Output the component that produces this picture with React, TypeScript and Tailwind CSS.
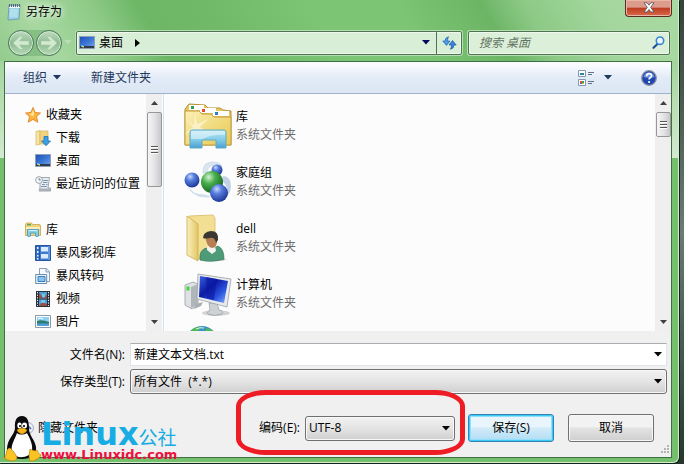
import { useState } from "react";
import type { ReactNode } from "react";

interface Place {
  name: string;
  icon: ReactNode;
}

function Arrow({ className = "" }: { className?: string }) {
  return (
    <svg viewBox="0 0 8 5" className={`h-[5px] w-2 shrink-0 ${className}`} fill="currentColor">
      <path d="M0 0h8L4 4.6z" />
    </svg>
  );
}

function NotepadIcon() {
  return (
    <svg viewBox="0 0 16 18" className="h-[18px] w-4 shrink-0">
      <path d="M3 2h11l-1 14-11 1z" fill="#9bd3e6" stroke="#5e8ea0" strokeWidth=".7" />
      <path d="M3 3h11v2H3z" fill="#e9f5f8" />
      <path d="M4 7h8M4 9h8M3.500 11h8M3.500 13h8" stroke="#c9ebf3" />
      <path d="M3.500 1v3M5.500 1v3M7.500 1v3M9.500 1v3M11.500 1v3M13.500 1v3" stroke="#4f5f66" strokeWidth=".9" />
    </svg>
  );
}

function DesktopIcon() {
  return (
    <svg viewBox="0 0 16 13" className="h-[13px] w-4 shrink-0">
      <defs>
        <linearGradient id="desk" x1="0" y1="0" x2="1" y2="1">
          <stop offset="0" stopColor="#1e4fb0" />
          <stop offset=".55" stopColor="#3f7ad9" />
          <stop offset="1" stopColor="#78a8ee" />
        </linearGradient>
      </defs>
      <path d="M.5.5h15v12H.5z" fill="url(#desk)" stroke="#8f9fb8" />
      <path d="M1 10h14v2H1z" fill="#303b4c" />
      <path d="M2 9h2v2H2z" fill="#4ec0f0" />
      <path d="M3.500 10h1.500v1.500H3.500z" fill="#f1d14b" />
    </svg>
  );
}

function StarIcon() {
  return (
    <svg viewBox="0 0 16 16" className="size-4 shrink-0">
      <path
        d="M8 .5l2.200 5 5.300.5-4 3.600 1.300 5.600L8 12.400l-4.800 2.800 1.300-5.600-4-3.600 5.300-.5z"
        fill="#fcb43c"
        stroke="#e0842a"
        strokeWidth=".9"
      />
      <path d="M8 3l1.300 3.600L8 9.500 4.500 7l2.300-.4z" fill="#ffe89c" />
    </svg>
  );
}

function DownloadIcon() {
  return (
    <svg viewBox="0 0 16 16" className="size-4 shrink-0">
      <path d="M1 1.500l4-1v14l-4 .5z" fill="#f6e3a0" stroke="#d5b45f" strokeWidth=".7" />
      <path d="M5 1h8v13H5z" fill="#efd57d" stroke="#d5b45f" strokeWidth=".7" />
      <path d="M9 6.500h4V11h2.500L11 15.700 6.500 11H9z" fill="#3ca0e8" stroke="#1f6eb5" strokeWidth=".8" />
    </svg>
  );
}

function RecentIcon() {
  return (
    <svg viewBox="0 0 16 16" className="size-4 shrink-0">
      <path d="M5 1.500h9.500L13 12h2.500v3H4l1-3z" fill="#e9ecef" stroke="#8b949c" strokeWidth=".8" />
      <path d="M8 4.500h5M8 6.500h4.500M7 8.500h3M11 8.500h1.500M6 10.500h6" stroke="#7b96b2" />
      <path d="M4 12.500h11V15H4z" fill="#a9b1b8" />
      <circle cx="4" cy="4" r="3.400" fill="#f3f7fa" stroke="#8b949c" strokeWidth=".8" />
      <path d="M4 2v2h1.800" stroke="#55718b" strokeWidth=".8" fill="none" />
    </svg>
  );
}

function SmallLibraryIcon() {
  return (
    <svg viewBox="0 0 16 16" className="size-4 shrink-0">
      <path d="M.5 13.500V2.500l1-1.500h5l1 1.500H14q1.500 0 1.500 1.500v9.500z" fill="#efd67c" stroke="#c9a347" strokeWidth=".8" />
      <path d="M2 2h4v1.500H2z" fill="#5aa95a" />
      <path d="M1 5h14v2H1z" fill="#f9eebb" />
      <path d="M2.500 7.500h11V14q-1.500 1.300-3 0v-3h-5v3q-1.500 1.300-3 0z" fill="#86cdea" stroke="#3f97c2" strokeWidth=".8" />
      <path d="M3.500 8.500h9" stroke="#d3f0fa" />
    </svg>
  );
}

function LibraryIcon() {
  return (
    <svg viewBox="0 0 48 48" className="size-12 shrink-0">
      <defs>
        <linearGradient id="lib" x1="0" y1="0" x2="1" y2="1">
          <stop offset="0" stopColor="#fbf0b4" />
          <stop offset="1" stopColor="#e8c850" />
        </linearGradient>
        <linearGradient id="stand" x1="0" y1="0" x2="0" y2="1">
          <stop offset="0" stopColor="#bfe9f4" />
          <stop offset=".6" stopColor="#7cc8e4" />
          <stop offset="1" stopColor="#4a9fd0" />
        </linearGradient>
      </defs>
      <path d="M1 43V7l4-5 16 1 3 3h12l3 2 8 1v34z" fill="#e5c65e" stroke="#b98f38" />
      <path d="M5 3h15v5H5z" fill="#fff" />
      <path d="M16 6h16v5H16z" fill="#fff" />
      <path d="M29 9h16v5H29z" fill="#fff" />
      <path d="M7 4h3v3H7z" fill="#2f9d4c" />
      <path d="M18 7h3v3h-3z" fill="#dd4b28" />
      <path d="M31 10h3v3h-3z" fill="#2c7fce" />
      <path d="M1 43V9h14l3 3h9l3 3h17v28z" fill="url(#lib)" stroke="#c49c42" />
      <path d="M1 32l8-7-6-7 7 5 1-12 2 11 11-5-8 8 10 6-12-3-3 12-2-11z" fill="#fffdf0" opacity=".55" />
      <path d="M8 28h32q2 0 2 2v16h-10v-8H18v8H6V30q0-2 2-2z" fill="url(#stand)" stroke="#5fabc9" />
      <path d="M7 29h34v4q-13-1-22 4H7z" fill="#e4f7fb" opacity=".6" />
    </svg>
  );
}

function FilmLibraryIcon() {
  return (
    <svg viewBox="0 0 16 16" className="size-4 shrink-0">
      <path d="M.5.500h4v15h-4z" fill="#376fc4" stroke="#24559f" />
      <path d="M4.500.500h11v15h-11z" fill="#3c7ad0" stroke="#24559f" />
      <path d="M2 2h1.500v2H2zM2 6h1.500v2H2zM2 10h1.500v1.500H2zM2 13h1.500v1.500H2z" fill="#e5f0ff" />
      <path d="M6 2h7v4.500H6zM6 9h7v4.500H6z" fill="#d9ecff" />
      <path d="M14 1v14" stroke="#86b4ed" />
    </svg>
  );
}

function TranscodeIcon() {
  return (
    <svg viewBox="0 0 16 16" className="size-4 shrink-0">
      <path d="M4.500.500h7l3 3v10h-10z" fill="#f5f9fd" stroke="#8ba0b5" />
      <path d="M11 .5v3.500h3.500" fill="#dce8f2" stroke="#8ba0b5" />
      <path d="M.7 6.500h11v9H.7z" fill="#eef5fb" stroke="#6b8bab" />
      <path d="M3 8.500h7v5H3z" fill="#8cc3ee" stroke="#3a7fbd" />
    </svg>
  );
}

function VideoIcon() {
  return (
    <svg viewBox="0 0 16 16" className="size-4 shrink-0">
      <path d="M1 0h14v16H1z" fill="#29313a" />
      <path d="M4 1h8v6.500H4zM4 8.500h8V15H4z" fill="#4e9fd8" />
      <path d="M4 2l3 3 1 2.500H4zM12 3v4.500H9zM4 15l3-4 5 2v2z" fill="#9a4d47" />
      <path d="M7 3h3v3H7zM6 9h4v3H6z" fill="#71c4ea" />
      <path d="M2.500 1v14M13.500 1v14" stroke="#e7edf2" strokeDasharray="1.300 1.300" />
    </svg>
  );
}

function PictureIcon() {
  return (
    <svg viewBox="0 0 16 13" className="h-[13px] w-4 shrink-0">
      <path d="M.5.500h15v12H.5z" fill="#fff" stroke="#8b98a5" />
      <path d="M2 2h12v9H2z" fill="#8fd1f2" />
      <path d="M2 6q5-2 12 1v2H2z" fill="#2f7d70" />
      <path d="M2 8.500h12V11H2z" fill="#4f9fd8" />
      <path d="M3 3.500q3-1 5 .5" stroke="#fff" fill="none" />
    </svg>
  );
}

function HomegroupIcon() {
  return (
    <svg viewBox="0 0 48 48" className="size-12 shrink-0">
      <defs>
        <radialGradient id="blueBall" cx=".38" cy=".28" r=".75">
          <stop offset="0" stopColor="#c9d9fb" />
          <stop offset=".35" stopColor="#5a80e0" />
          <stop offset="1" stopColor="#1a3390" />
        </radialGradient>
        <radialGradient id="greenBall" cx=".35" cy=".28" r=".75">
          <stop offset="0" stopColor="#d4f3ce" />
          <stop offset=".4" stopColor="#48ad4c" />
          <stop offset="1" stopColor="#14641f" />
        </radialGradient>
      </defs>
      <path d="M19 15q-1-11 10-11 6 0 9 4l-8-1q-7 1-7 8z" fill="#dbe5f0" stroke="#c0d1e4" strokeWidth=".6" />
      <path d="M39 18q8 0 8 11-1 8-5 9 3-10-4-15z" fill="#c2d2e6" />
      <path d="M4 28q4 7 12 8 7 0 11 3-10 2-17-3-5-3-6-8z" fill="#d3dfec" />
      <circle cx="33" cy="12" r="5.500" fill="url(#blueBall)" />
      <circle cx="8" cy="22" r="7.500" fill="url(#blueBall)" />
      <circle cx="28" cy="24" r="11" fill="url(#greenBall)" />
      <circle cx="35" cy="35" r="9" fill="url(#blueBall)" />
    </svg>
  );
}

function UserFolderIcon() {
  return (
    <svg viewBox="0 0 48 48" className="size-12 shrink-0">
      <defs>
        <linearGradient id="flap" x1="0" y1="0" x2="1" y2="0">
          <stop offset="0" stopColor="#faf0bd" />
          <stop offset="1" stopColor="#e3c768" />
        </linearGradient>
      </defs>
      <path d="M5 2l24-1 2 3v38l-17 3z" fill="#f2df93" stroke="#d9bb63" strokeWidth=".8" />
      <path d="M3 2l11 8v37L3 41z" fill="url(#flap)" stroke="#cfa948" strokeWidth=".8" />
      <path d="M32 45h11l-4 2H28z" fill="#c9c9c9" />
      <path d="M16 46q-1-11 7-12l5 1 6-3q6 3 6 13-12 4-24 1z" fill="#4d9b78" stroke="#33795b" strokeWidth=".7" />
      <path d="M23 32h8l1 5-4 3-5-4z" fill="#f2f3ef" />
      <path d="M21 22q1-4 5-4 8 0 7 8 0 8-5 8t-7-12z" fill="#b97f54" />
      <path d="M19 24q0-6 8-7 8 0 7 9l-2 3q-1-6-6-5-5 1-7 0z" fill="#3b3632" />
    </svg>
  );
}

function ComputerIcon() {
  return (
    <svg viewBox="0 0 48 48" className="size-12 shrink-0">
      <defs>
        <linearGradient id="screen" x1="0" y1="0" x2="1" y2="1">
          <stop offset="0" stopColor="#3a62df" />
          <stop offset=".4" stopColor="#0b1aa4" />
          <stop offset=".7" stopColor="#2c55e2" />
          <stop offset="1" stopColor="#8cb2f8" />
        </linearGradient>
      </defs>
      <ellipse cx="32" cy="43" rx="14" ry="3" fill="#d3d3d3" />
      <path d="M1 15l8-3 5 2v21l-6 4-7-4z" fill="#dfe2e4" stroke="#8d9296" strokeWidth=".7" />
      <path d="M7 17l7-3v21l-7 3z" fill="#b0b5b9" />
      <path d="M2.500 16.500h3v4h-3z" fill="#43d63c" />
      <path d="M12 34l7-2-2 4-7 3z" fill="#a8adb1" />
      <path d="M25 33h8l2 7q5 1 3 4-8 3-14 0-2-2 2-4z" fill="#cdd1d4" stroke="#969ba0" strokeWidth=".7" />
      <path d="M14 4l33 5-4 28-30-8z" fill="#e8eaec" stroke="#9ba1a7" strokeWidth=".8" />
      <path d="M16 6l28 5-4 22-25-6z" fill="url(#screen)" />
      <path d="M22 7l11 2-3 21-7-2z" fill="#0b18a0" opacity=".6" />
    </svg>
  );
}

function NetworkIcon() {
  return (
    <svg viewBox="0 0 48 48" className="size-12 shrink-0">
      <circle cx="18" cy="16" r="16" fill="#3c93c6" />
      <path d="M5 6q6-6 13-5l-4 4-7 3zM22 2q9 1 11 9l-6-3-6 1zM3 11l9-2 5 9-13 3z" fill="#4fb857" />
      <path d="M12 3q4-2 8-1M14 7q4-2 7-1" stroke="#d9f2fb" fill="none" />
    </svg>
  );
}

function RefreshIcon() {
  return (
    <svg viewBox="0 0 15 14" className="h-3.5 w-[15px]">
      <path d="M6.500.8Q3 1.500 3 5H.8l3.700 4.500L8 5H5.500q0-2.500 1-4.200z" fill="#4d9de6" stroke="#2264b0" strokeWidth=".7" />
      <path d="M8.500 13.200q3.500-.7 3.500-4.200h2.200l-3.700-4.500L7 9h2.500q0 2.500-1 4.200z" fill="#3a84da" stroke="#1d57a0" strokeWidth=".7" />
    </svg>
  );
}

function NavCircle({ label, flip = false }: { label: string; flip?: boolean }) {
  return (
    <button
      aria-label={label}
      className="flex size-[26px] items-center justify-center rounded-full border border-[#4d7a5c] bg-linear-to-b from-[#bfdcc0] via-[#8dbb93] to-[#b4dbb5] shadow-[inset_0_0_0_1px_#d5ead2]"
    >
      <svg viewBox="0 0 18 16" className={flip ? "h-4 w-[18px] -scale-x-100" : "h-4 w-[18px]"}>
        <path d="M1 8l7-6.500h3L7.500 6H17v4H7.500l3.500 4.500H8z" fill="#d3ead0" stroke="#a7cba8" strokeWidth=".6" />
      </svg>
    </button>
  );
}

function ScrollBar({ thumb }: { thumb: string }) {
  return (
    <div className="flex w-4 shrink-0 flex-col items-center bg-[#efefef] text-[#404040]">
      <button aria-label="Scroll up" className="flex h-[18px] w-full items-center justify-center">
        <svg viewBox="0 0 7 4" className="h-1 w-[7px]" fill="currentColor">
          <path d="M0 4h7L3.500 0z" />
        </svg>
      </button>
      <div
        className={`flex w-[15px] flex-col items-center justify-center gap-px rounded-xs border border-[#979797] bg-linear-to-r from-[#f5f5f5] via-[#e4e4e6] to-[#c9c9cd] ${thumb}`}
      >
        <i className="h-0.5 w-[7px] border-t border-[#555] bg-white" />
        <i className="h-0.5 w-[7px] border-t border-[#555] bg-white" />
        <i className="h-0.5 w-[7px] border-t border-[#555] bg-white" />
      </div>
      <button aria-label="Scroll down" className="mt-auto flex h-[18px] w-full items-center justify-center">
        <svg viewBox="0 0 7 4" className="h-1 w-[7px]" fill="currentColor">
          <path d="M0 0h7L3.500 4z" />
        </svg>
      </button>
    </div>
  );
}

function PlaceGroup({ title, icon, places }: { title: string; icon: ReactNode; places: Place[] }) {
  return (
    <section>
      <h2 className="flex h-[23px] items-center gap-[5px] pl-5">
        {icon}
        {title}
      </h2>
      <ul>
        {places.map((place) => (
          <li key={place.name} className="flex h-[23px] items-center gap-[5px] pl-[30px] whitespace-nowrap">
            {place.icon}
            {place.name}
          </li>
        ))}
      </ul>
    </section>
  );
}

function Penguin() {
  return (
    <svg viewBox="0 0 38 46" className="h-[46px] w-[38px] shrink-0">
      <path
        d="M18 0c-6 0-7.500 5-7 12C11 18 3 23 3 33c0 6 5 10 15 10 9 0 15-4 14-12-1-7-7-12-7-18C25 5 23.500 0 18 0z"
        fill="#0b0b0d"
      />
      <path d="M13 17c2 2 7 2 10 0 3 6 6 11 5 18-2 7-15 8-19 3-4-8 2-14 4-21z" fill="#fff" />
      <ellipse cx="15.500" cy="9.500" rx="2.200" ry="3" fill="#fff" />
      <ellipse cx="20.500" cy="9.500" rx="2.500" ry="3" fill="#fff" />
      <circle cx="16" cy="10" r="1.100" />
      <circle cx="20" cy="10" r="1.100" />
      <path d="M13 14q5-4 10 0-1 3-5 4-4-1-5-4z" fill="#f7b71b" stroke="#b87508" strokeWidth=".5" />
      <path d="M5 32q3 0 8 9 0 4-5 4-4-1-7-2-1-2 1-4 0-5 3-7z" fill="#fcc422" stroke="#a97a08" strokeWidth=".6" />
      <path d="M26 33q5 3 7 1 1 4 4 5 0 2-4 4-4 3-7 2-2-4 0-12z" fill="#fcc422" stroke="#a97a08" strokeWidth=".6" />
    </svg>
  );
}

const favorites: Place[] = [
  { name: "下载", icon: <DownloadIcon /> },
  { name: "桌面", icon: <DesktopIcon /> },
  { name: "最近访问的位置", icon: <RecentIcon /> },
];

const libraries: Place[] = [
  { name: "暴风影视库", icon: <FilmLibraryIcon /> },
  { name: "暴风转码", icon: <TranscodeIcon /> },
  { name: "视频", icon: <VideoIcon /> },
  { name: "图片", icon: <PictureIcon /> },
];

const folders: Place[] = [
  { name: "库", icon: <LibraryIcon /> },
  { name: "家庭组", icon: <HomegroupIcon /> },
  { name: "dell", icon: <UserFolderIcon /> },
  { name: "计算机", icon: <ComputerIcon /> },
];

const selectLook =
  "h-full w-full appearance-none rounded-[3px] border border-[#707070] bg-linear-to-b from-[#f2f2f2] via-[#e4e4e4] to-[#cfcfcf] px-[3px] shadow-[inset_0_0_0_1px_#f8f8f8] outline-none";

export default function App() {
  const [fileName, setFileName] = useState("新建文本文档.txt");
  const [fileType, setFileType] = useState("all");
  const [encoding, setEncoding] = useState("UTF-8");

  return (
    <div className="relative flex h-screen flex-col bg-linear-to-b from-[#33443a] via-[#6b7b72] to-[#26372c] pr-[5px] pb-px font-['Open_Sans','Noto_Sans_CJK_SC',sans-serif] text-[12px] leading-[18px] text-black">
      <div className="flex min-h-0 flex-1 flex-col rounded-br-md border-r border-b border-[#d5ecd1] bg-linear-to-b from-[#a2d59a] from-[60px] via-[#d3ead0] via-[158px] to-[#74c06d] to-[158px] pr-1.5 pb-1 pl-1 shadow-[1px_1px_0_#10251a]">
        <header className="-mr-1.5 -ml-1 bg-[linear-gradient(60deg,#93cb8d_0,#a8d8a1_8%,#8fcb88_17%,#6cb665_24%,#70ba69_34%,#7cc575_48%,#7cc575_60%,#6cb565_72%,#8cc986_78%,#a3d69c_88%,#a9d9a2_100%)] pr-1.5 pl-1">
          <div className="flex h-6 items-center pl-0.5">
            <NotepadIcon />
            <h1 className="px-1 [text-shadow:0_0_6px_#fff,0_0_10px_#fff]">另存为</h1>
            <button
              aria-label="关闭"
              className="ml-auto flex h-[17px] w-[47px] items-center justify-center self-start rounded-b-[4px] border border-t-0 border-[#5b2a23] bg-linear-to-b from-[#dc9c8c] from-45% via-[#bd3b1e] via-50% to-[#d8694a] shadow-[inset_0_0_0_1px_#eab6a8]"
            >
              <svg viewBox="0 0 12 11" className="mb-0.5 h-[11px] w-3">
                <path
                  d="M1 .8h3L6 3.200 8 .8h3L7.700 5.300 11 10H8L6 7.500 4 10H1l3.300-4.700z"
                  fill="#fff"
                  stroke="#4b4f5c"
                  strokeWidth=".8"
                />
              </svg>
            </button>
          </div>
          <nav className="flex h-[37px] items-center pr-0.5 pl-1">
            <div className="flex gap-0.5 rounded-full bg-[#86bf84]">
              <NavCircle label="后退" />
              <NavCircle label="前进" flip />
            </div>
            <button aria-label="最近的位置" className="mr-1 ml-0.5 text-[#b9dcb4]">
              <Arrow />
            </button>
            <div className="flex h-6 flex-1 items-center rounded-xs border border-[#4c7550] bg-[#d9eed6] shadow-[0_0_0_1px_#b5ddb0,inset_0_0_0_1px_#eff8ed]">
              <span className="pl-0.5">
                <DesktopIcon />
              </span>
              <button className="pl-1">桌面</button>
              <svg viewBox="0 0 5 8" className="ml-3 h-2 w-[5px]">
                <path d="M0 0l5 4-5 4z" />
              </svg>
              <button aria-label="历史路径" className="mr-1.5 ml-auto text-[#04045c]">
                <Arrow />
              </button>
              <button
                aria-label="刷新"
                className="flex h-full w-[25px] items-center justify-center border-l border-[#4c7550]"
              >
                <RefreshIcon />
              </button>
            </div>
            <label className="ml-1.5 flex h-6 w-[202px] items-center rounded-xs border border-[#4c7550] bg-[#dcf0d9] px-1 shadow-[0_0_0_1px_#b5ddb0,inset_0_0_0_1px_#eff8ed]">
              <input
                type="search"
                aria-label="搜索"
                placeholder="搜索 桌面"
                className="min-w-0 flex-1 pl-[6px] italic outline-none placeholder:text-[#637563]"
              />
              <svg viewBox="0 0 13 13" className="size-[13px]" fill="none">
                <path d="M6 7.500L1.500 11.800" stroke="#1d4f9c" strokeWidth="2.200" strokeLinecap="round" />
                <circle cx="8" cy="4.700" r="3.700" stroke="#3a85d2" strokeWidth="1.600" fill="#e9f7fa" />
              </svg>
            </label>
          </nav>
        </header>

        <main className="flex min-h-0 flex-1 flex-col border border-[#3e7044] bg-[#f0f0f0]">
          <div className="flex h-8 shrink-0 items-center border-b border-[#a3b2cb] bg-linear-to-b from-[#fafcff] from-10% via-[#e3ebf7] via-50% to-[#dbe6f4] px-[18px] text-[#1e395b]">
            <button className="flex items-center gap-1.5">
              组织
              <Arrow />
            </button>
            <button className="ml-[30px]">新建文件夹</button>
            <button aria-label="更改视图" className="ml-auto flex items-center gap-2.5">
              <svg viewBox="0 0 16 16" className="size-4">
                <path d="M.5.500h7v6h-7zM.5 9.500h7v6h-7z" fill="#fff" stroke="#8497ae" />
                <path d="M2 3h4v2H2z" fill="#2688a8" />
                <path d="M2 11h2v2H2z" fill="#e34b3c" />
                <path d="M4 11h2v2H4z" fill="#3fa545" />
                <path d="M2 13h2v1H2z" fill="#3567c9" />
                <path d="M4 13h2v1H4z" fill="#eab72e" />
                <path d="M10 2.500h6M10 4.500h4M10 11.500h6M10 13.500h4" stroke="#62738a" />
              </svg>
              <Arrow />
            </button>
            <button aria-label="帮助" className="-mr-1 ml-[29px]">
              <svg viewBox="0 0 16 16" className="size-4">
                <circle cx="8" cy="8" r="7.300" fill="#2146ae" stroke="#8b93a1" strokeWidth="1.300" />
                <path d="M2.500 7a5.600 5.600 0 0 1 11 0q-5 2-11 0z" fill="#6f94e3" />
                <path
                  d="M5.600 6.200q0-2.600 2.500-2.600t2.400 2.200q0 1.200-1.300 1.900-1.100.6-1.100 1.700"
                  fill="none"
                  stroke="#fff"
                  strokeWidth="1.600"
                />
                <circle cx="8.100" cy="12" r="1.100" fill="#fff" />
              </svg>
            </button>
          </div>

          <div className="flex min-h-0 flex-1 bg-[#fcfcfc]">
            <aside className="flex w-[159px] shrink-0 border-r border-[#d3e2f3] pr-px">
              <div className="min-w-0 flex-1 space-y-[23px] overflow-hidden pt-[9px]">
                <PlaceGroup title="收藏夹" icon={<StarIcon />} places={favorites} />
                <PlaceGroup title="库" icon={<SmallLibraryIcon />} places={libraries} />
              </div>
              <ScrollBar thumb="h-[75px]" />
            </aside>
            <ul className="min-w-0 flex-1 overflow-hidden pt-1 pl-5">
              {folders.map((folder) => (
                <li key={folder.name} className="flex h-14 items-center gap-1">
                  {folder.icon}
                  <div>
                    <p>{folder.name}</p>
                    <p className="text-[#6d6d6d]">系统文件夹</p>
                  </div>
                </li>
              ))}
              <li className="flex h-14 items-center">
                <NetworkIcon />
              </li>
            </ul>
            <ScrollBar thumb="h-[25px]" />
          </div>

          <form className="shrink-0 pt-3 pb-[15px]" onSubmit={(e) => e.preventDefault()}>
            <div className="flex h-[23px] items-center gap-[5px] pr-1">
              <label htmlFor="file-name" className="w-[120px] text-right">
                文件名(N):
              </label>
              <div className="flex h-full flex-1 items-center border border-[#dfe3ea] border-t-[#abadb3] bg-white">
                <input
                  id="file-name"
                  value={fileName}
                  onChange={(e) => setFileName(e.target.value)}
                  className="min-w-0 flex-1 px-[3px] outline-none"
                />
                <button type="button" aria-label="历史文件名" className="px-1">
                  <Arrow />
                </button>
              </div>
            </div>
            <div className="mt-[3px] flex h-[25px] items-center gap-[5px] pr-1">
              <label htmlFor="file-type" className="w-[120px] text-right">
                保存类型(T):
              </label>
              <div className="relative h-full flex-1">
                <select
                  id="file-type"
                  value={fileType}
                  onChange={(e) => setFileType(e.target.value)}
                  className={selectLook}
                >
                  <option value="all">所有文件&nbsp; (*.*)</option>
                </select>
                <Arrow className="pointer-events-none absolute top-2.5 right-[5px]" />
              </div>
            </div>
            <div className="mt-5 flex h-7 items-center pr-[17px] pl-[17px]">
              <button type="button" className="flex items-center gap-1">
                <svg viewBox="0 0 12 12" className="size-3">
                  <circle cx="6" cy="6" r="5.500" fill="#e9eff6" stroke="#9fb2c9" />
                  <path d="M3 7l3-3 3 3" fill="none" stroke="#3c5f8a" strokeWidth="1.500" />
                </svg>
                隐藏文件夹
              </button>
              <div className="relative ml-auto flex items-center gap-[5px]">
                <label htmlFor="encoding">编码(E):</label>
                <div className="relative h-[25px] w-[150px]">
                  <select
                    id="encoding"
                    value={encoding}
                    onChange={(e) => setEncoding(e.target.value)}
                    className={selectLook}
                  >
                    <option>UTF-8</option>
                    <option>ANSI</option>
                    <option>Unicode</option>
                  </select>
                  <Arrow className="pointer-events-none absolute top-2.5 right-[5px]" />
                </div>
                <div className="pointer-events-none absolute -top-[26px] -right-2.5 -bottom-3.5 -left-[23px] rounded-[30px/16px] border-[5px] border-[#ee1c25]" />
              </div>
              <button
                type="submit"
                className="ml-[13px] h-7 w-[86px] rounded-[3px] border border-[#3c7fb1] bg-linear-to-b from-[#e9f5fc] from-45% via-[#d3ebf9] via-50% to-[#b0dcf4] shadow-[inset_0_0_0_1px_#35cdf8,inset_0_0_0_2px_#8fe0fa]"
              >
                保存(S)
              </button>
              <button
                type="button"
                className="ml-3.5 h-7 w-[86px] rounded-[3px] border border-[#707070] bg-linear-to-b from-[#f2f2f2] from-45% via-[#e3e3e3] via-50% to-[#cfcfcf] shadow-[inset_0_0_0_1px_#f8f8f8]"
              >
                取消
              </button>
            </div>
          </form>
        </main>
      </div>

      <svg viewBox="0 0 9 9" className="absolute right-3.5 bottom-2.5 size-[9px]" fill="#b4b4b4">
        <path d="M6 0h2v2H6zM3 3h2v2H3zM6 3h2v2H6zM0 6h2v2H0zM3 6h2v2H3zM6 6h2v2H6z" />
      </svg>

      <div className="pointer-events-none absolute bottom-0.5 left-1 flex items-end">
        <Penguin />
        <div className="-ml-px font-['DejaVu_Sans','Noto_Sans_CJK_SC',sans-serif] whitespace-nowrap">
          <p className="flex items-baseline text-[#17ace3]">
            <span className="text-[32px] leading-5 font-bold">Linux</span>
            <span className="text-[19px] leading-5">公社</span>
          </p>
          <p className="text-[13px] leading-[14px] font-bold text-[#ed0f3c]">www.Linuxidc.com</p>
        </div>
      </div>
    </div>
  );
}
